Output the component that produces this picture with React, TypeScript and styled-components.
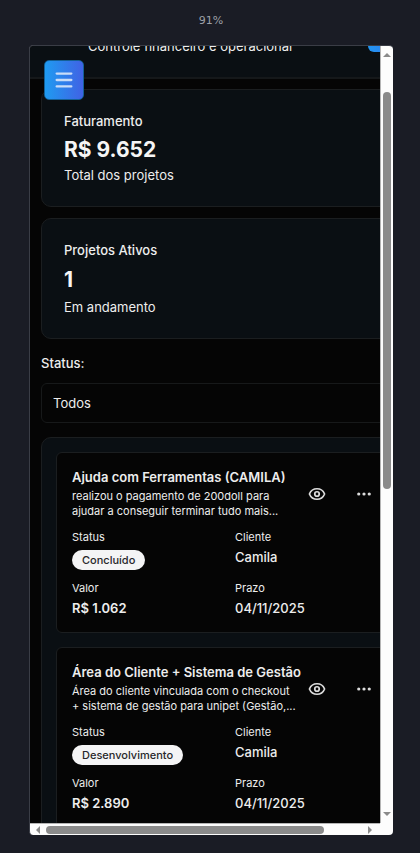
import React from 'react';
import styled, { createGlobalStyle } from 'styled-components';
import { Ellipsis, Eye, Menu } from 'lucide-react';

const GlobalStyle = createGlobalStyle`
  *, *::before, *::after { box-sizing: border-box; }
  body {
    margin: 0;
    background: #1a1c25;
    color: #ededed;
    font-family: Inter, "Liberation Sans", sans-serif;
    font-size: 13px;
  }
  h2, h3, p, dl, dd, dt { margin: 0; font: inherit; }
  button, select { font: inherit; color: inherit; border: 0; background: none; padding: 0; }
`;

const Stage = styled.div`
  display: flex;
  flex-direction: column;
  height: 100vh;
  padding: 12px 27px 18px 29px;
`;

const ZoomLabel = styled.div`
  flex: none;
  height: 33px;
  line-height: 18px;
  text-align: center;
  color: #9da0a8;
  font-family: "DejaVu Sans", sans-serif;
  font-size: 11px;
`;

const Device = styled.div`
  flex: 1;
  min-height: 0;
  display: grid;
  grid-template-columns: minmax(0, 1fr) 13px;
  grid-template-rows: minmax(0, 1fr) 12px;
  border: 1px solid #3a3d46;
  border-right: 0;
  border-bottom: 0;
  border-radius: 4px;
  overflow: hidden;
  background: #fdfdfd;
`;

const Viewport = styled.div`
  position: relative;
  overflow: hidden;
  background: #050505;
`;

const Page = styled.div`
  width: 100%;
  min-width: 399px;
`;

const Header = styled.header`
  display: flex;
  justify-content: space-between;
  align-items: flex-start;
  margin-top: -30px;
  padding: 20px 11px 21px 58px;
  border-bottom: 2px solid #15181a;
  background: #0a0f13;
  line-height: 20px;
`;

const HeaderAction = styled.button`
  width: 50px;
  height: 36px;
  margin-top: -20px;
  border-radius: 6px;
  background: linear-gradient(90deg, #2196f3, #4361e6);
`;

const MenuButton = styled.button`
  position: absolute;
  top: 14px;
  left: 14px;
  display: grid;
  place-items: center;
  width: 40px;
  height: 40px;
  border: 1px solid #146096;
  border-radius: 5px;
  background: linear-gradient(90deg, #1f9bf1, #4062e4);
  color: #c9dcf8;
`;

const Main = styled.main`
  padding: 10px 11px;
`;

const Metric = styled.section<{ $roomy?: boolean }>`
  margin-bottom: 11px;
  padding: 21px 22px 22px;
  border: 1px solid #1b1e20;
  border-radius: 10px;
  background: #0a0f13;

  h2 { line-height: 20px; font-weight: 500; }
  p { line-height: 18px; }
  strong {
    display: block;
    margin: ${({ $roomy }) => ($roomy ? '6px 0 4px' : '5px 0 2px')};
    line-height: 28px;
    font-size: 21px;
    font-weight: 700;
    color: #f5f5f5;
  }
`;

const FilterLabel = styled.label`
  display: block;
  margin-top: 14px;
  line-height: 20px;
  font-weight: 500;
`;

const FilterSelect = styled.select`
  display: block;
  width: 100%;
  height: 40px;
  margin: 10px 0 14px;
  padding: 0 11px;
  appearance: none;
  border: 1px solid #17191a;
  border-radius: 6px;
  background: #050505;
`;

const ProjectList = styled.section`
  display: grid;
  gap: 14px;
  padding: 14px;
  border: 1px solid #1b1e20;
  border-radius: 10px;
  background: #0a0f13;
`;

const ProjectCard = styled.article`
  padding: 15px 15px 17px;
  border: 1px solid #1b1e20;
  border-radius: 6px;
  background: #050505;
`;

const ProjectHead = styled.div`
  display: grid;
  grid-template-columns: minmax(0, 1fr) 47px 47px;
  align-items: center;
  margin-bottom: 11px;
`;

const ProjectTitle = styled.h3`
  line-height: 18px;
  font-weight: 600;
  white-space: nowrap;
`;

const ProjectText = styled.p`
  margin-top: 3px;
  line-height: 15px;
  font-size: 11px;
  white-space: pre;
`;

const IconButton = styled.button`
  display: grid;
  place-items: center;
  height: 32px;
  color: #dcdcdc;
`;

const Facts = styled.dl`
  display: grid;
  grid-template-columns: 1fr 1fr;
  gap: 11px;

  dt { line-height: 14px; font-size: 11px; }
  dd { margin-top: 6px; line-height: 14px; font-weight: 500; }
`;

const Amount = styled.span`
  font-weight: 600;
`;

const Badge = styled.span`
  display: block;
  width: fit-content;
  padding: 0 10px;
  border-radius: 10px;
  background: #f4f4f5;
  color: #27272a;
  line-height: 20px;
  font-size: 11px;
`;

const ScrollBar = styled.div<{ $vertical?: boolean }>`
  display: flex;
  flex-direction: ${({ $vertical }) => ($vertical ? 'column' : 'row')};
  align-items: center;
  justify-content: space-between;
  ${({ $vertical }) =>
    $vertical ? 'border-left: 1px solid #b5b5b5; padding: 5px 0;' : 'border-top: 1px solid #b5b5b5; padding: 0 6px 0 4px;'}
`;

const Track = styled.div<{ $vertical?: boolean }>`
  flex: 1;
  display: flex;
  flex-direction: ${({ $vertical }) => ($vertical ? 'column' : 'row')};
  margin: ${({ $vertical }) => ($vertical ? '4px 0' : '0 4px')};
`;

const Space = styled.div<{ $share: number }>`
  flex: ${({ $share }) => $share} 0 0;
`;

const Thumb = styled(Space)`
  min-width: 8px;
  min-height: 8px;
  border-radius: 4px;
  background: #8b8b8b;
`;

const turns = { up: 0, right: 90, down: 180, left: 270 };

function Arrow({ to }: { to: keyof typeof turns }) {
  return (
    <svg width="8" height="8" viewBox="0 0 8 8" aria-hidden="true">
      <path d="M4 2 8 6H0Z" fill="#8b8b8b" transform={`rotate(${turns[to]} 4 4)`} />
    </svg>
  );
}

const projects = [
  {
    title: 'Ajuda com Ferramentas (CAMILA)',
    text: 'realizou o pagamento de 200doll para\najudar a conseguir terminar tudo mais...',
    status: 'Concluído',
    client: 'Camila',
    amount: 'R$ 1.062',
    due: '04/11/2025',
  },
  {
    title: 'Área do Cliente + Sistema de Gestão',
    text: 'Área do cliente vinculada com o checkout\n+ sistema de gestão para unipet (Gestão,...',
    status: 'Desenvolvimento',
    client: 'Camila',
    amount: 'R$ 2.890',
    due: '04/11/2025',
  },
];

export default function App() {
  return (
    <>
      <GlobalStyle />
      <Stage>
        <ZoomLabel>91%</ZoomLabel>
        <Device>
          <Viewport>
            <Page>
              <Header>
                <p>Controle financeiro e operacional</p>
                <HeaderAction aria-label="Novo projeto" />
              </Header>
              <Main>
                <Metric>
                  <h2>Faturamento</h2>
                  <strong>R$ 9.652</strong>
                  <p>Total dos projetos</p>
                </Metric>
                <Metric $roomy>
                  <h2>Projetos Ativos</h2>
                  <strong>1</strong>
                  <p>Em andamento</p>
                </Metric>
                <FilterLabel htmlFor="status">Status:</FilterLabel>
                <FilterSelect id="status" defaultValue="Todos">
                  <option>Todos</option>
                  <option>Concluído</option>
                  <option>Desenvolvimento</option>
                </FilterSelect>
                <ProjectList>
                  {projects.map((p) => (
                    <ProjectCard key={p.title}>
                      <ProjectHead>
                        <div>
                          <ProjectTitle>{p.title}</ProjectTitle>
                          <ProjectText>{p.text}</ProjectText>
                        </div>
                        <IconButton aria-label="Ver projeto">
                          <Eye size={18} strokeWidth={2.3} />
                        </IconButton>
                        <IconButton aria-label="Mais opções">
                          <Ellipsis size={18} strokeWidth={2.3} />
                        </IconButton>
                      </ProjectHead>
                      <Facts>
                        <div>
                          <dt>Status</dt>
                          <dd><Badge>{p.status}</Badge></dd>
                        </div>
                        <div>
                          <dt>Cliente</dt>
                          <dd>{p.client}</dd>
                        </div>
                        <div>
                          <dt>Valor</dt>
                          <dd><Amount>{p.amount}</Amount></dd>
                        </div>
                        <div>
                          <dt>Prazo</dt>
                          <dd>{p.due}</dd>
                        </div>
                      </Facts>
                    </ProjectCard>
                  ))}
                </ProjectList>
              </Main>
            </Page>
            <MenuButton aria-label="Abrir menu">
              <Menu size={22} strokeWidth={2.5} />
            </MenuButton>
          </Viewport>
          <ScrollBar $vertical>
            <Arrow to="up" />
            <Track $vertical>
              <Space $share={29} />
              <Thumb $share={397} />
              <Space $share={317} />
            </Track>
            <Arrow to="down" />
          </ScrollBar>
          <ScrollBar>
            <Arrow to="left" />
            <Track>
              <Thumb $share={279} />
              <Space $share={38} />
            </Track>
            <Arrow to="right" />
          </ScrollBar>
        </Device>
      </Stage>
    </>
  );
}
